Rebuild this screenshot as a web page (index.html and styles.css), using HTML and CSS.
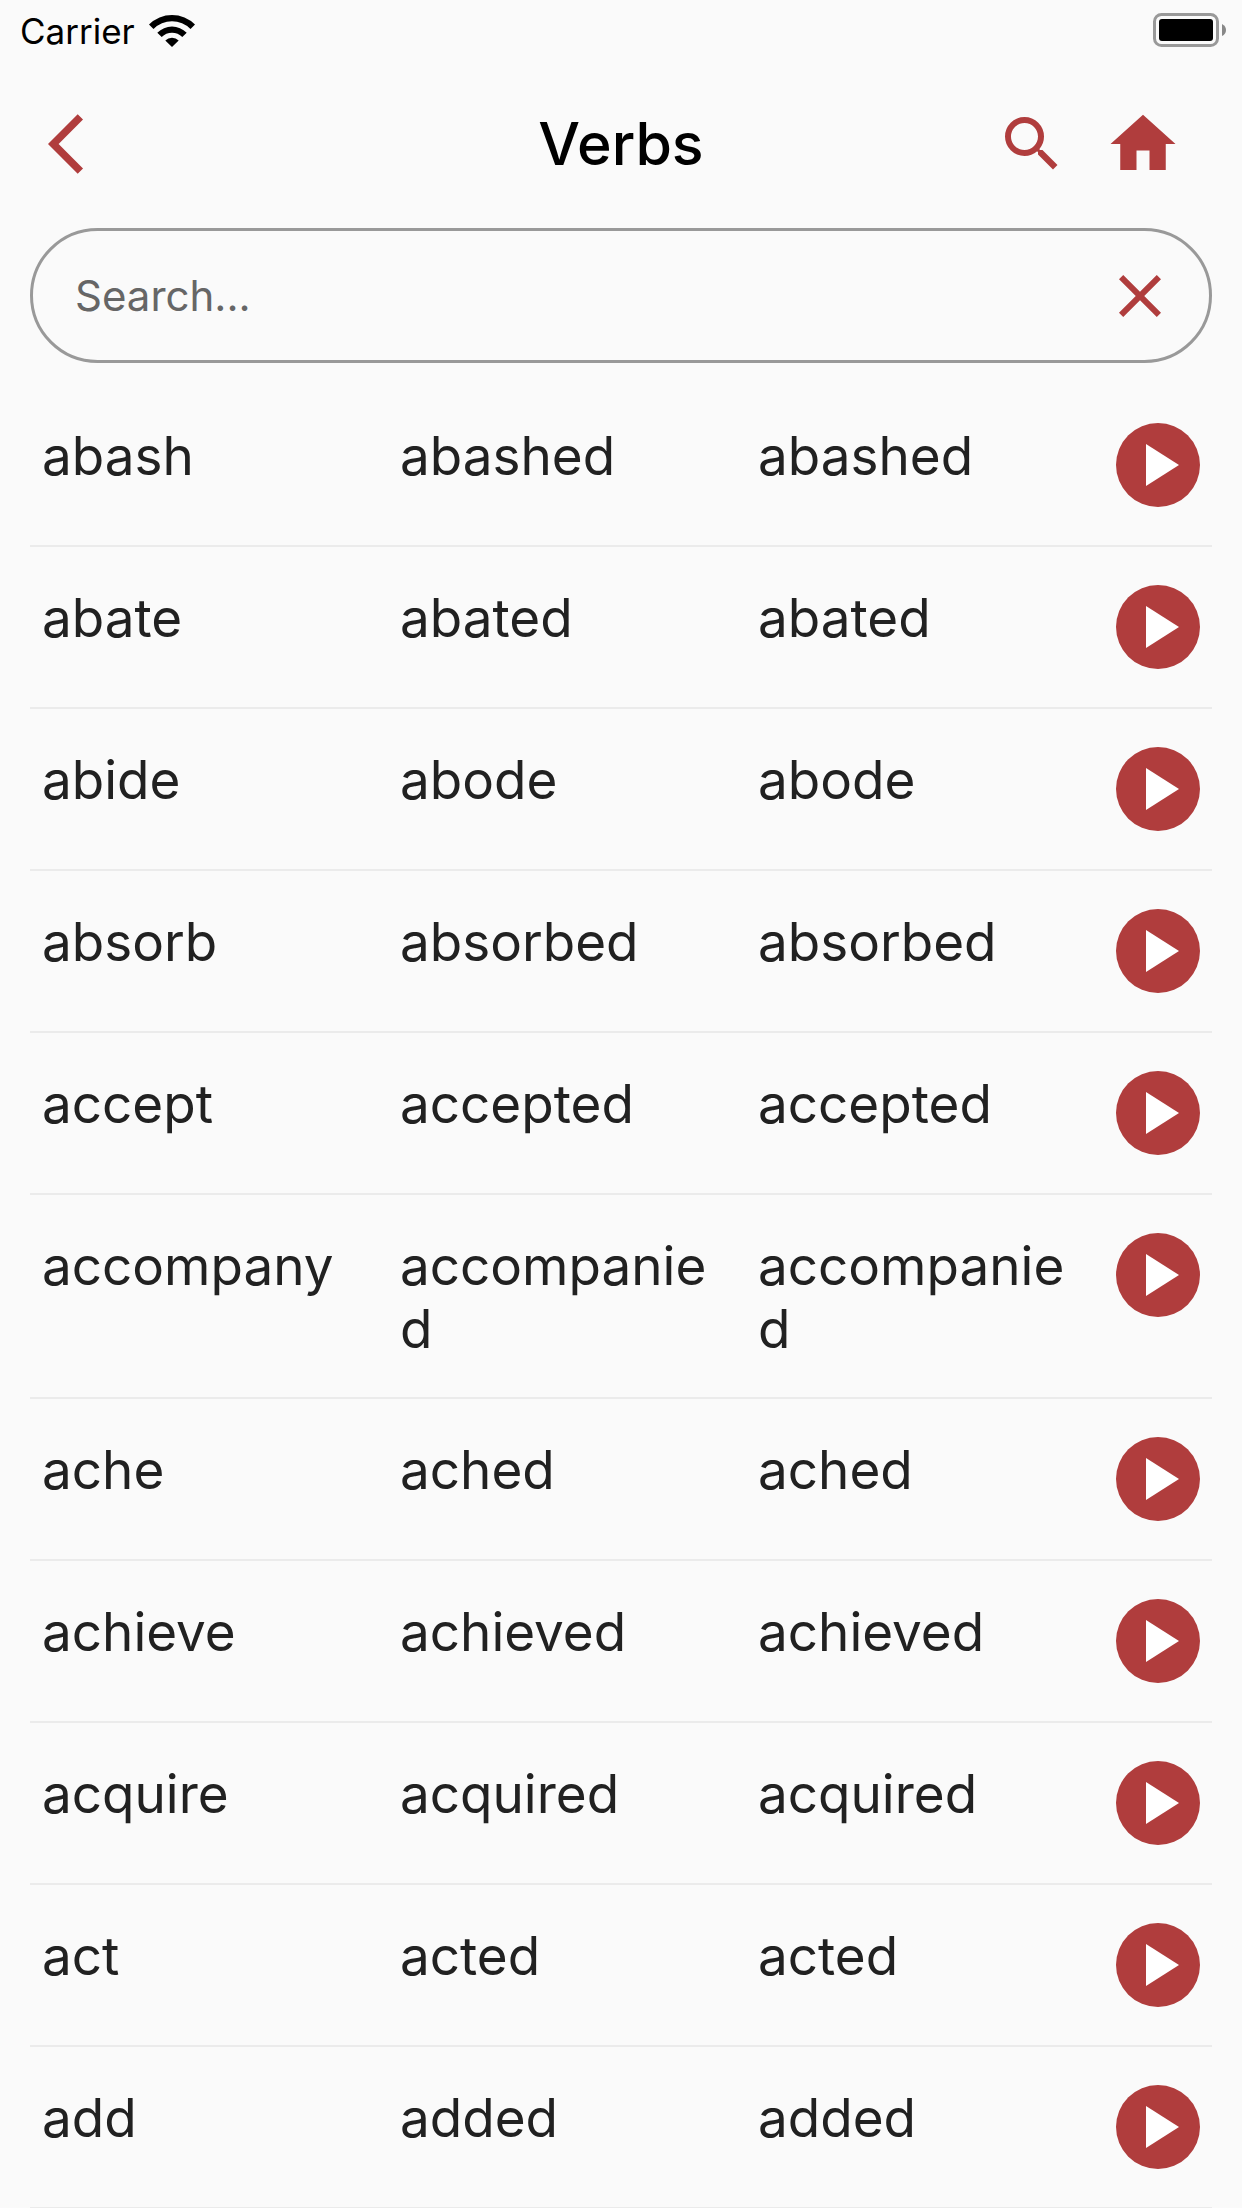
FILE: index.html
```html
<!DOCTYPE html>
<html lang="en">
<head>
<meta charset="utf-8">
<meta name="viewport" content="width=device-width, initial-scale=1">
<title>Verbs</title>
<link rel="stylesheet" href="styles.css">
</head>
<body>
<svg class="sprite" aria-hidden="true">
  <symbol id="play" viewBox="0 0 84 84"><circle cx="42" cy="42" r="42" fill="#b03d3d"/><path d="M30 21v42l33-21z" fill="#fff"/></symbol>
</svg>
<div class="status">
  <span class="carrier">Carrier</span>
  <svg class="wifi" viewBox="0 0 46 33" aria-hidden="true"><path d="M0 10.500A32.500 32.500 0 0 1 46 10.500L41.500 15A26.200 26.200 0 0 0 4.500 15ZM8.300 18.700A20.800 20.800 0 0 1 37.700 18.700L33.300 23A14.600 14.600 0 0 0 12.700 23ZM16.300 26.600A9.500 9.500 0 0 1 29.700 26.600L23 33Z"/></svg>
  <svg class="battery" viewBox="0 0 73 34" aria-hidden="true"><rect x="1.500" y="1.500" width="63" height="31" rx="7" fill="none" stroke="#999" stroke-width="3"/><rect x="6" y="6" width="54" height="22" rx="3"/><path d="M69 11q4 2 4 6t-4 6z" fill="#888"/></svg>
</div>
<header class="bar">
  <div class="side">
    <button class="icon-button" type="button" aria-label="Back"><svg class="icon" viewBox="0 0 24 24"><path d="M11.670 3.870 9.900 2.100 0 12l9.900 9.900 1.770-1.770L3.540 12z"/></svg></button>
  </div>
  <h1 class="title">Verbs</h1>
  <div class="side side-end">
    <button class="icon-button" type="button" aria-label="Search"><svg class="icon" viewBox="0 0 24 24"><path d="M15.500 14h-.79l-.28-.27A6.471 6.471 0 0 0 16 9.500 6.500 6.500 0 1 0 9.500 16c1.610 0 3.090-.59 4.230-1.570l.27.28v.79l5 4.990L20.490 19l-4.990-5zm-6 0C7.010 14 5 11.990 5 9.500S7.010 5 9.500 5 14 7.010 14 9.500 11.990 14 9.500 14z"/></svg></button>
    <button class="icon-button" type="button" aria-label="Home"><svg class="icon icon-home" viewBox="0 0 24 24"><path d="M10 20v-6h4v6h5v-8h3L12 3 2 12h3v8z"/></svg></button>
  </div>
</header>
<main class="content">
  <form class="search">
    <input class="search-input" type="text" placeholder="Search..." aria-label="Search verbs">
    <button class="icon-button" type="reset" aria-label="Clear"><svg class="icon" viewBox="0 0 24 24"><path d="M19 6.410 17.590 5 12 10.590 6.410 5 5 6.410 10.590 12 5 17.590 6.410 19 12 13.410 17.590 19 19 17.590 13.410 12z"/></svg></button>
  </form>
  <table class="verbs" aria-label="Verb forms">
    <tbody>
      <tr class="verb"><td>abash</td><td>abashed</td><td>abashed</td><td><button class="play" type="button" aria-label="Play abash"><svg><use href="#play"/></svg></button></td></tr>
      <tr class="verb"><td>abate</td><td>abated</td><td>abated</td><td><button class="play" type="button" aria-label="Play abate"><svg><use href="#play"/></svg></button></td></tr>
      <tr class="verb"><td>abide</td><td>abode</td><td>abode</td><td><button class="play" type="button" aria-label="Play abide"><svg><use href="#play"/></svg></button></td></tr>
      <tr class="verb"><td>absorb</td><td>absorbed</td><td>absorbed</td><td><button class="play" type="button" aria-label="Play absorb"><svg><use href="#play"/></svg></button></td></tr>
      <tr class="verb"><td>accept</td><td>accepted</td><td>accepted</td><td><button class="play" type="button" aria-label="Play accept"><svg><use href="#play"/></svg></button></td></tr>
      <tr class="verb"><td>accompany</td><td>accompanied</td><td>accompanied</td><td><button class="play" type="button" aria-label="Play accompany"><svg><use href="#play"/></svg></button></td></tr>
      <tr class="verb"><td>ache</td><td>ached</td><td>ached</td><td><button class="play" type="button" aria-label="Play ache"><svg><use href="#play"/></svg></button></td></tr>
      <tr class="verb"><td>achieve</td><td>achieved</td><td>achieved</td><td><button class="play" type="button" aria-label="Play achieve"><svg><use href="#play"/></svg></button></td></tr>
      <tr class="verb"><td>acquire</td><td>acquired</td><td>acquired</td><td><button class="play" type="button" aria-label="Play acquire"><svg><use href="#play"/></svg></button></td></tr>
      <tr class="verb"><td>act</td><td>acted</td><td>acted</td><td><button class="play" type="button" aria-label="Play act"><svg><use href="#play"/></svg></button></td></tr>
      <tr class="verb"><td>add</td><td>added</td><td>added</td><td><button class="play" type="button" aria-label="Play add"><svg><use href="#play"/></svg></button></td></tr>
    </tbody>
  </table>
</main>
</body>
</html>
```
FILE: styles.css
```css
* { box-sizing: border-box; }

body {
  margin: 0;
  background: #fafafa;
  color: #212121;
  font-family: Inter, "Liberation Sans", sans-serif;
}

button {
  display: block;
  padding: 0;
  border: 0;
  background: none;
  color: #b03d3d;
}

svg { display: block; }

.sprite { display: none; }

.status {
  display: flex;
  align-items: center;
  height: 60px;
  padding: 0 16px 0 20px;
  color: #000;
}

.carrier { font-size: 35px; line-height: 60px; padding-top: 2px; }

.wifi { width: 46px; height: 33px; margin-left: 14px; }

.battery { width: 73px; height: 34px; margin-left: auto; }

.bar {
  display: grid;
  grid-template-columns: 1fr auto 1fr;
  align-items: center;
  height: 168px;
  padding: 0 60px;
}

.side { display: flex; align-items: center; gap: 36px; margin-left: -12px; }

.side-end { justify-content: flex-end; margin-left: 0; }

.title {
  margin: 0;
  color: #000;
  font-size: 59px;
  font-weight: 500;
  line-height: 72px;
}

.icon { width: 72px; height: 72px; fill: currentColor; }

.icon-home { width: 78px; height: 78px; }

.content { padding: 0 30px; }

.search {
  display: flex;
  align-items: center;
  height: 135px;
  padding: 0 33px 0 42px;
  border: 3px solid #999;
  border-radius: 68px;
}

.search-input {
  flex: 1;
  min-width: 0;
  padding: 0;
  border: 0;
  outline: 0;
  background: none;
  color: #212121;
  font: 42px/60px Inter, "Liberation Sans", sans-serif;
}

.search-input::placeholder { color: #666; opacity: 1; }

.verbs { display: block; margin-top: 22px; }

.verbs tbody { display: block; }

.verb {
  display: grid;
  grid-template-columns: repeat(3, minmax(0, 1fr)) 84px;
  align-items: start;
  padding: 38px 12px 36px;
  border-bottom: 2px solid #ebebeb;
}

.verb td {
  padding: 2px 36px 0 0;
  font-size: 53px;
  line-height: 63px;
  overflow-wrap: anywhere;
}

.verb td:last-child { padding: 0 0 2px; }

.play, .play svg { width: 84px; height: 84px; }
```
